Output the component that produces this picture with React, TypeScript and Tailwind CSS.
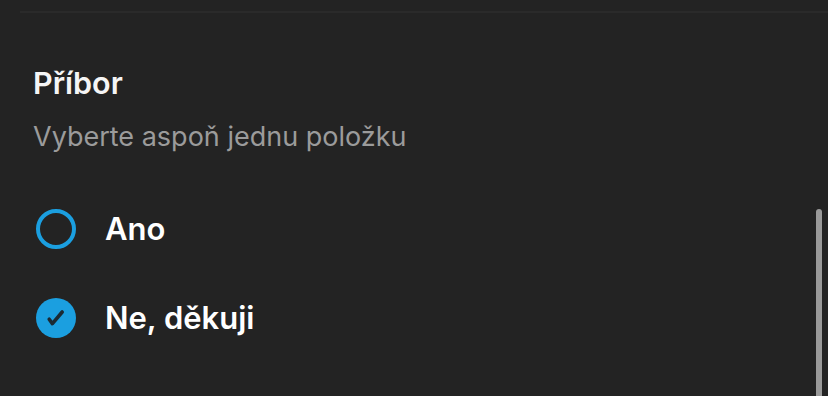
import React from "react";

export default function App() {
  return (
    <div
      className="relative w-[828px] h-[396px] overflow-hidden bg-[#232323] text-white"
      style={{ fontFamily: "Inter, 'Noto Sans', sans-serif" }}
    >
      <div className="pt-[11px] pl-[20px]">
        <div className="h-[2px] bg-[#2a2a2a]" />
      </div>
      <div className="pl-[33px] pt-[52px] flex flex-col">
        <div className="text-[30.5px] leading-[36px] font-semibold text-[#f5f5f5]">Příbor</div>
        <div className="mt-[19px] text-[27px] leading-[34px] text-[#9b9b9b]">Vyberte aspoň jednu položku</div>
        <div className="mt-[55px] flex flex-col gap-[49px] pl-[3px]">
          <div className="flex items-center gap-[29px]">
            <div className="w-[40px] h-[40px] rounded-full border-[4px] border-[#1b9fe0]" />
            <span className="text-[31px] leading-[40px] font-semibold">Ano</span>
          </div>
          <div className="flex items-center gap-[29px]">
            <div className="w-[40px] h-[40px] rounded-full bg-[#1b9fe0] flex items-center justify-center">
              <svg width="20" height="20" viewBox="0 0 20 20">
                <path d="M3.2 11.2 L6.4 15.6 L16.2 4" fill="none" stroke="#1b2a33" strokeWidth="3.6" strokeLinecap="round" strokeLinejoin="round" />
              </svg>
            </div>
            <span className="text-[31px] leading-[40px] font-semibold">Ne, děkuji</span>
          </div>
        </div>
      </div>
      <div className="absolute left-[816px] top-[209px] w-[6px] h-[200px] rounded-full bg-[#999999]" />
    </div>
  );
}
